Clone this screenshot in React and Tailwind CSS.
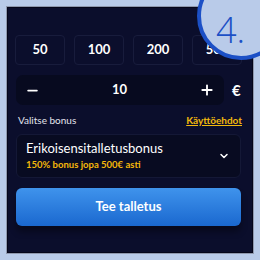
import { Minus, Plus, ChevronDown } from 'lucide-react';

const presets = ['50', '100', '200', '500'];

export default function App() {
  return (
    <div className="w-[260px] h-[260px] bg-[#b9cbe9] p-[6px] overflow-hidden relative" style={{ fontFamily: 'Lato, "Open Sans", sans-serif' }}>
      <div className="w-full h-full border border-[#8f98ae]">
        <div className="w-full h-full border border-[#05061a] bg-[#0b0e2c] px-[7px] pt-[27px] flex flex-col">
          {/* Presets */}
          <div className="flex gap-[9px] h-[30px]">
            {presets.map((p) => (
              <div key={p} className="w-[50px] h-[30px] shrink-0 rounded-[4px] border border-[#181c3c] flex items-center justify-center text-white text-[13px] font-bold">
                {p}
              </div>
            ))}
          </div>

          {/* Amount */}
          <div className="flex items-center h-[30px] mt-[10px] gap-[8px]">
            <div className="w-[208px] h-[30px] ml-[1px] rounded-[7px] bg-[#070a1f] flex items-center justify-between px-[9px] text-white">
              <Minus className="w-[15px] h-[15px]" strokeWidth={2.8} />
              <span className="text-[13px] font-bold">10</span>
              <Plus className="w-[16px] h-[16px]" strokeWidth={2.8} />
            </div>
            <span className="text-white text-[15px] font-bold leading-none">€</span>
          </div>

          {/* Bonus label */}
          <div className="flex items-center justify-between mt-[9px] px-[3px] h-[12px]">
            <span className="text-[10px] text-[#e2e4ec]">Valitse bonus</span>
            <span className="text-[10px] font-bold text-[#f2b90d] underline">Käyttöehdot</span>
          </div>

          {/* Bonus select */}
          <div className="mt-[8px] ml-[1px] w-[225px] h-[44px] rounded-[6px] bg-[#080b21] border border-[#141836] flex items-center justify-between pl-[9px] pr-[10px]">
            <div className="flex flex-col leading-none">
              <span className="text-[13px] text-white">Erikoisensitalletusbonus</span>
              <span className="text-[9.5px] font-bold text-[#f5b80a] mt-[5px]">150% bonus jopa 500€ asti</span>
            </div>
            <ChevronDown className="w-[12px] h-[12px] text-white" strokeWidth={3} />
          </div>

          {/* Deposit button */}
          <div className="mt-[10px] ml-[1px] w-[225px] h-[38px] rounded-[6px] bg-gradient-to-b from-[#3f93ec] to-[#1a68cf] shadow-[0_6px_6px_rgba(0,0,0,0.35)] flex items-center justify-center text-white text-[13px] font-bold">
            Tee talletus
          </div>
        </div>
      </div>

      {/* Step badge */}
      <div className="absolute left-[197px] top-[-28px] w-[88px] h-[88px] rounded-full border-[4px] border-[#1c50c6] bg-[#b9cbe9]" />
      <span className="absolute left-[216px] top-[12px] text-[36px] leading-none text-[#1c50c6] font-light" style={{ fontFamily: '"Open Sans", sans-serif' }}>
        4.
      </span>
    </div>
  );
}
